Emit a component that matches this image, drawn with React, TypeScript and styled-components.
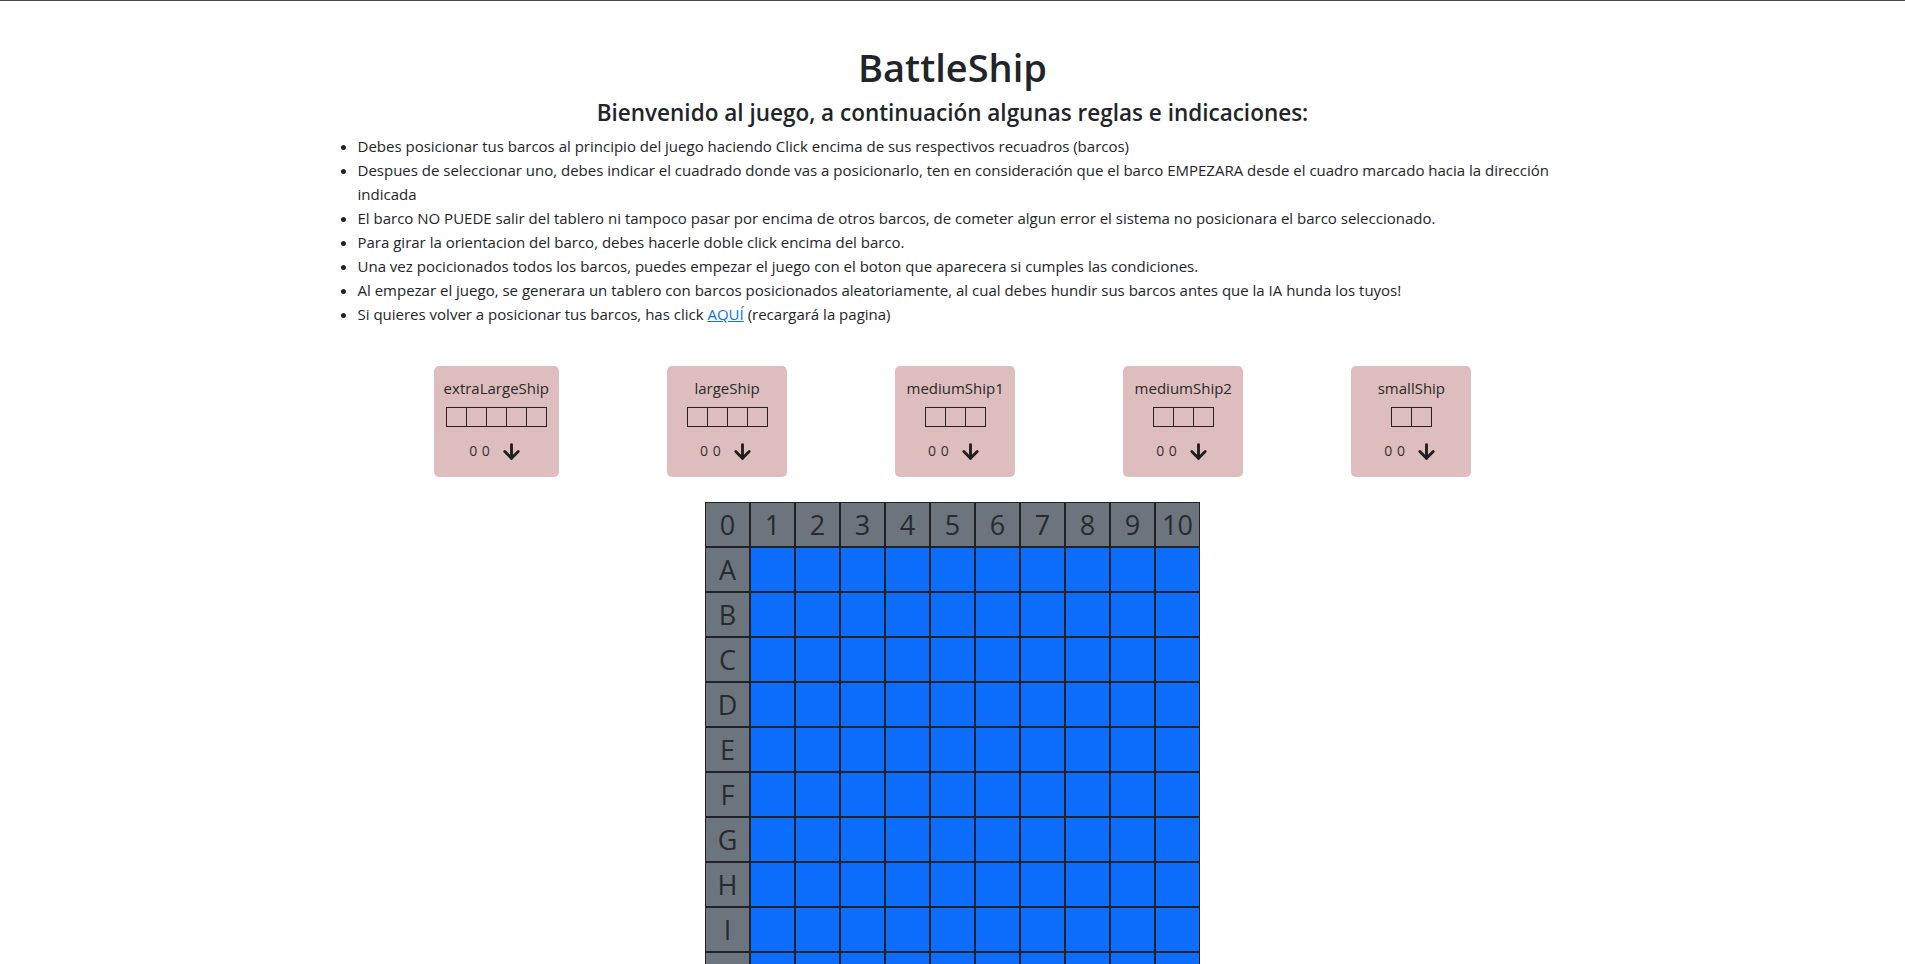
import React from "react";
import styled, { createGlobalStyle } from "styled-components";
import { ArrowDown } from "lucide-react";

const GlobalStyle = createGlobalStyle`
  body {
    margin: 0;
    border-top: 1px solid #4a4a4a;
    font-family: "Open Sans", "Noto Sans", sans-serif;
    font-size: 15px;
    line-height: 24px;
    color: #212529;
    background: #fff;
  }
`;

const Page = styled.div`
  max-width: 1254px;
  margin: 0 auto;
  padding-top: 42px;
`;

const Title = styled.h1`
  margin: 0 0 8px;
  text-align: center;
  font-size: 38px;
  line-height: 48px;
  font-weight: 600;
`;

const Subtitle = styled.h4`
  margin: 0 0 7px;
  text-align: center;
  font-size: 22.5px;
  line-height: 28px;
  font-weight: 600;
`;

const Rules = styled.ul`
  margin: 0;
  padding-left: 32px;
`;

const Link = styled.a`
  color: #0d6efd;
  text-decoration: underline;
`;

const ShipRow = styled.div`
  display: flex;
  justify-content: space-evenly;
  align-items: flex-start;
  margin-top: 40px;
`;

const ShipCard = styled.div`
  min-width: 120px;
  box-sizing: border-box;
  padding: 10px 10px 14px;
  background: #ddbdbe;
  border-radius: 5px;
  display: flex;
  flex-direction: column;
  align-items: center;
`;

const ShipName = styled.div`
  font-size: 15px;
  line-height: 24px;
  color: #2a2a2a;
`;

const ShipBody = styled.div`
  display: flex;
  margin: 7px 0 12px;
`;

const ShipCell = styled.div`
  width: 19px;
  height: 18px;
  border: 1px solid #2b2020;
  & + & {
    margin-left: -1px;
  }
`;

const ShipFooter = styled.div`
  display: flex;
  align-items: center;
  gap: 10px;
  height: 24px;
  font-size: 14px;
  color: #333;
  letter-spacing: 0.5px;
`;

const Board = styled.div`
  display: grid;
  grid-template-columns: repeat(11, 45px);
  grid-auto-rows: 45px;
  width: 495px;
  margin: 25px auto 0;
`;

const Cell = styled.div<{ $head?: boolean }>`
  box-sizing: border-box;
  border: 1px solid #1f2328;
  background: ${(p) => (p.$head ? "#6c757d" : "#0d6efd")};
  color: #262b30;
  font-size: 27px;
  display: flex;
  align-items: center;
  justify-content: center;
`;

const ships = [
  { name: "extraLargeShip", size: 5 },
  { name: "largeShip", size: 4 },
  { name: "mediumShip1", size: 3 },
  { name: "mediumShip2", size: 3 },
  { name: "smallShip", size: 2 },
];

const rows = ["A", "B", "C", "D", "E", "F", "G", "H", "I", "J"];

export default function App() {
  return (
    <>
      <GlobalStyle />
      <Page>
        <Title>BattleShip</Title>
        <Subtitle>
          Bienvenido al juego, a continuación algunas reglas e indicaciones:
        </Subtitle>
        <Rules>
          <li>
            Debes posicionar tus barcos al principio del juego haciendo Click
            encima de sus respectivos recuadros (barcos)
          </li>
          <li>
            Despues de seleccionar uno, debes indicar el cuadrado donde vas a
            posicionarlo, ten en consideración que el barco EMPEZARA desde el
            cuadro marcado hacia la dirección indicada
          </li>
          <li>
            El barco NO PUEDE salir del tablero ni tampoco pasar por encima de
            otros barcos, de cometer algun error el sistema no posicionara el
            barco seleccionado.
          </li>
          <li>
            Para girar la orientacion del barco, debes hacerle doble click
            encima del barco.
          </li>
          <li>
            Una vez pocicionados todos los barcos, puedes empezar el juego con
            el boton que aparecera si cumples las condiciones.
          </li>
          <li>
            Al empezar el juego, se generara un tablero con barcos posicionados
            aleatoriamente, al cual debes hundir sus barcos antes que la IA
            hunda los tuyos!
          </li>
          <li>
            Si quieres volver a posicionar tus barcos, has click{" "}
            <Link href="#">AQUÍ</Link> (recargará la pagina)
          </li>
        </Rules>
        <ShipRow>
          {ships.map((s) => (
            <ShipCard key={s.name}>
              <ShipName>{s.name}</ShipName>
              <ShipBody>
                {Array.from({ length: s.size }).map((_, i) => (
                  <ShipCell key={i} />
                ))}
              </ShipBody>
              <ShipFooter>
                <span>0 0</span>
                <ArrowDown size={23} strokeWidth={3} color="#1e1e1e" />
              </ShipFooter>
            </ShipCard>
          ))}
        </ShipRow>
      </Page>
      <Board>
        {Array.from({ length: 11 }).map((_, c) => (
          <Cell key={"h" + c} $head>
            {c}
          </Cell>
        ))}
        {rows.map((r) => (
          <React.Fragment key={r}>
            <Cell $head>{r}</Cell>
            {Array.from({ length: 10 }).map((_, c) => (
              <Cell key={r + c} />
            ))}
          </React.Fragment>
        ))}
      </Board>
    </>
  );
}
